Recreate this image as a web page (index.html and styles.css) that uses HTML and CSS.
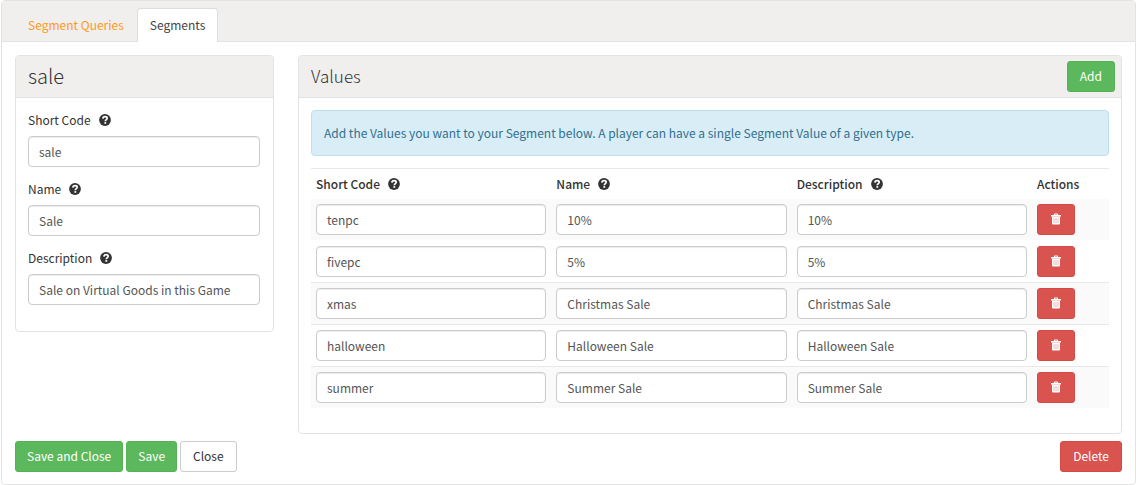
FILE: index.html
```html
<!DOCTYPE html>
<html lang="en">
<head>
<meta charset="utf-8">
<title>Segments</title>
<link rel="stylesheet" href="styles.css">
</head>
<body>
<svg class="sprite" aria-hidden="true">
  <symbol id="help" viewBox="0 0 12 12"><circle cx="6" cy="6" r="5.9" fill="currentColor"/><path d="M3.900 4.600C4 3.200 4.900 2.700 6.100 2.700c1.300 0 2.100.6 2.100 1.600 0 1.400-1.800 1.300-1.900 2.900" fill="none" stroke="#fff" stroke-width="1.700"/><path d="M5.400 8.100h1.800v1.700H5.400z" fill="#fff"/></symbol>
  <symbol id="trash" viewBox="0 0 12 12"><path d="M4 2V1.200Q4 .5 4.700.5h2.600Q8 .5 8 1.200V2h3v1.500H1V2zM5 2h2v-.6H5z" fill="currentColor"/><path d="M2 3.500h8V10.500q0 1-1 1H3q-1 0-1-1z" fill="currentColor"/><path d="M4 5v5M6 5v5M8 5v5" stroke="#d9534f" stroke-opacity=".5" stroke-width=".8"/></symbol>
</svg>
<main class="box">
  <nav class="tabs">
    <a class="tab" href="#queries">Segment Queries</a>
    <a class="tab active" href="#segments" aria-current="page">Segments</a>
  </nav>
  <form class="content">
    <div class="columns">
      <section class="panel">
        <header class="panel-head"><h1 class="title large">sale</h1></header>
        <div class="panel-body">
          <div class="field"><label class="label" for="code">Short Code <svg class="help"><use href="#help"/></svg></label><input class="input" id="code" value="sale"></div>
          <div class="field"><label class="label" for="name">Name <svg class="help"><use href="#help"/></svg></label><input class="input" id="name" value="Sale"></div>
          <div class="field"><label class="label" for="desc">Description <svg class="help"><use href="#help"/></svg></label><input class="input" id="desc" value="Sale on Virtual Goods in this Game"></div>
        </div>
      </section>
      <section class="panel">
        <header class="panel-head"><h2 class="title">Values</h2><button class="btn green" type="button">Add</button></header>
        <div class="panel-body">
          <p class="alert">Add the Values you want to your Segment below. A player can have a single Segment Value of a given type.</p>
          <table class="table">
            <thead><tr>
              <th><span class="label">Short Code <svg class="help"><use href="#help"/></svg></span></th>
              <th><span class="label">Name <svg class="help"><use href="#help"/></svg></span></th>
              <th><span class="label">Description <svg class="help"><use href="#help"/></svg></span></th>
              <th class="actions"><span class="label">Actions</span></th>
            </tr></thead>
            <tbody>
              <tr><td><input class="input" aria-label="Short Code" value="tenpc"></td><td><input class="input" aria-label="Name" value="10%"></td><td><input class="input" aria-label="Description" value="10%"></td><td><button class="btn red remove" type="button" aria-label="Remove"><svg class="trash"><use href="#trash"/></svg></button></td></tr>
              <tr><td><input class="input" aria-label="Short Code" value="fivepc"></td><td><input class="input" aria-label="Name" value="5%"></td><td><input class="input" aria-label="Description" value="5%"></td><td><button class="btn red remove" type="button" aria-label="Remove"><svg class="trash"><use href="#trash"/></svg></button></td></tr>
              <tr><td><input class="input" aria-label="Short Code" value="xmas"></td><td><input class="input" aria-label="Name" value="Christmas Sale"></td><td><input class="input" aria-label="Description" value="Christmas Sale"></td><td><button class="btn red remove" type="button" aria-label="Remove"><svg class="trash"><use href="#trash"/></svg></button></td></tr>
              <tr><td><input class="input" aria-label="Short Code" value="halloween"></td><td><input class="input" aria-label="Name" value="Halloween Sale"></td><td><input class="input" aria-label="Description" value="Halloween Sale"></td><td><button class="btn red remove" type="button" aria-label="Remove"><svg class="trash"><use href="#trash"/></svg></button></td></tr>
              <tr><td><input class="input" aria-label="Short Code" value="summer"></td><td><input class="input" aria-label="Name" value="Summer Sale"></td><td><input class="input" aria-label="Description" value="Summer Sale"></td><td><button class="btn red remove" type="button" aria-label="Remove"><svg class="trash"><use href="#trash"/></svg></button></td></tr>
            </tbody>
          </table>
        </div>
      </section>
    </div>
    <div class="buttons">
      <button class="btn green" type="button">Save and Close</button>
      <button class="btn green" type="button">Save</button>
      <button class="btn plain" type="button">Close</button>
      <button class="btn red last" type="button">Delete</button>
    </div>
  </form>
</main>
</body>
</html>
```
FILE: styles.css
```css
* { box-sizing: border-box; }
body {
  margin: 0 0 0 1px;
  background: #fff;
  color: #333;
  font: 12px/18px "Noto Sans CJK SC", "Source Sans Pro", sans-serif;
}
.sprite { display: none; }
.box { border: 1px solid #e3e3e3; border-radius: 4px; }
.tabs {
  display: flex;
  padding: 7px 13px 0;
  background: #f0efee;
  border-bottom: 1px solid #e3e3e3;
  border-radius: 3px 3px 0 0;
}
.tab {
  padding: 7px 12px 8px;
  margin-bottom: -1px;
  border: 1px solid transparent;
  border-bottom: 0;
  border-radius: 4px 4px 0 0;
  color: #ff9a22;
  text-decoration: none;
}
.tab.active { color: #444; background: #fff; border-color: #ddd; }
.content { padding: 13px 13px 12px; }
.columns {
  display: grid;
  grid-template-columns: 259fr 824fr;
  gap: 24px;
  align-items: start;
}
.panel {
  min-width: 0;
  border: 1px solid #e3e3e3;
  border-radius: 4px;
}
.panel-head {
  display: flex;
  align-items: center;
  justify-content: space-between;
  height: 42px;
  padding: 0 6px 0 12px;
  background: #f0efee;
  border-bottom: 1px solid #e3e3e3;
  border-radius: 3px 3px 0 0;
}
.title {
  margin: 0;
  padding-bottom: 2px;
  font-family: "Noto Sans CJK SC Light", "Noto Sans CJK SC", sans-serif;
  font-size: 17px;
  line-height: 24px;
  font-weight: 300;
}
.title.large { font-size: 20px; }
.panel-body { padding: 12px 12px 25px; }
.label { display: flex; align-items: center; gap: 8px; }
.help { width: 12px; height: 12px; }
.field { padding: 1px 1px 0 0; }
.field .label { padding-bottom: 7px; }
.field + .field { margin-top: 12px; }
.field:last-child { margin-bottom: 1px; }
.input {
  display: block;
  width: 100%;
  height: 31px;
  padding: 0 10px 1px;
  border: 1px solid #ccc;
  border-radius: 4px;
  box-shadow: inset 0 1px 1px rgba(0, 0, 0, .08);
  background: #fff;
  color: #555;
  font: inherit;
}
.alert {
  margin: 0 0 12px;
  padding: 13px 12px;
  border: 1px solid #bce0f0;
  border-radius: 4px;
  background: #d9edf7;
  color: #31708f;
}
.table { width: 100%; table-layout: fixed; border-collapse: separate; border-spacing: 0; }
th { padding: 6px 5px; border-top: 1px solid #e9e9e9; text-align: left; font-weight: 500; }
.actions { width: 77px; }
td { padding: 5px; border-top: 1px solid #e9e9e9; }
tbody tr:nth-child(-n+2) td { border-color: transparent; }
tbody tr:first-child td { border-top: 0; }
tbody tr:nth-child(odd) { background: #fafafa; }
.btn {
  height: 31px;
  padding: 0 12px 1px;
  border: 1px solid transparent;
  border-radius: 3px;
  font: inherit;
  color: #fff;
}
.green { background: #5cb85c; border-color: #54b254; }
.red { background: #d9534f; border-color: #d64a46; }
.plain { background: #fff; color: #333; border-color: #ccc; }
.remove { display: flex; align-items: center; justify-content: center; width: 38px; }
.trash { width: 12px; height: 12px; }
.buttons { display: flex; gap: 3px; padding-top: 7px; }
.buttons .green { padding: 0 11px 1px; }
.last { margin-left: auto; }
```
